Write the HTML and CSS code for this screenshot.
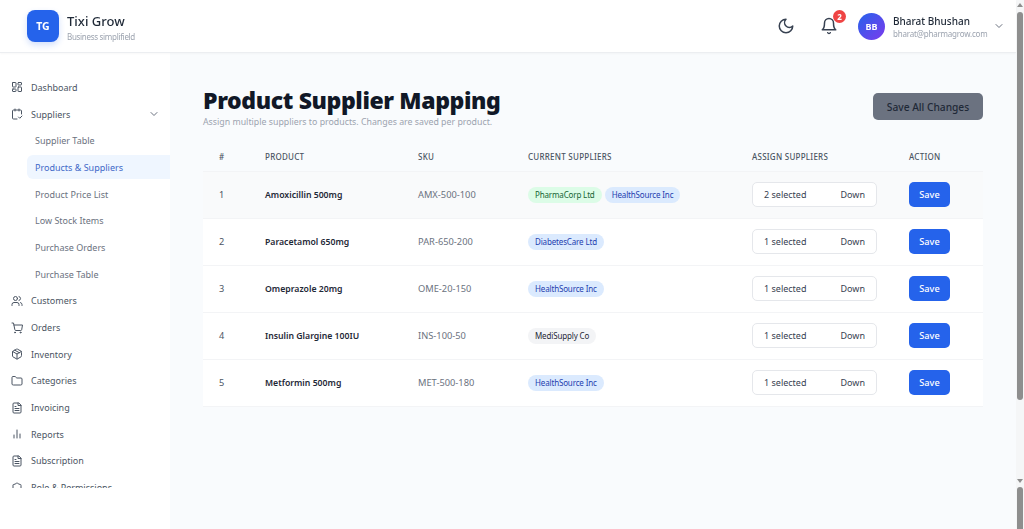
FILE: index.html
```html
<!DOCTYPE html>
<html lang="en">
<head>
<meta charset="utf-8">
<title>Product Supplier Mapping</title>
<link rel="stylesheet" href="styles.css">
</head>
<body>
<div class="app">
  <header class="topbar">
    <div class="brand">
      <div class="logo">TG</div>
      <div class="brand-text">
        <div class="brand-name">Tixi Grow</div>
        <div class="brand-sub">Business simplifield</div>
      </div>
    </div>
    <div class="top-actions">
      <svg class="moon" viewBox="0 0 24 24" width="18" height="18"><path d="M12 3a6 6 0 0 0 9 9 9 9 0 1 1-9-9Z"/></svg>
      <div class="bell-wrap">
        <svg class="moon" viewBox="0 0 24 24" width="18" height="18"><path d="M6 8a6 6 0 0 1 12 0c0 7 3 9 3 9H3s3-2 3-9"/><path d="M10.3 21a1.94 1.94 0 0 0 3.4 0"/></svg>
        <span class="badge">2</span>
      </div>
      <div class="user">
        <div class="avatar">BB</div>
        <div class="user-text">
          <div class="user-name">Bharat Bhushan</div>
          <div class="user-mail">bharat@pharmagrow.com</div>
        </div>
        <svg class="chev" viewBox="0 0 24 24" width="12" height="12"><path d="m6 9 6 6 6-6"/></svg>
      </div>
    </div>
  </header>
  <div class="body">
    <aside class="sidebar">
      <nav class="nav">
        <a class="item"><svg class="ico" viewBox="0 0 24 24"><rect x="3" y="3" width="7" height="9" rx="1"/><rect x="14" y="3" width="7" height="5" rx="1"/><rect x="14" y="12" width="7" height="9" rx="1"/><rect x="3" y="16" width="7" height="5" rx="1"/></svg>Dashboard</a>
        <a class="item"><svg class="ico" viewBox="0 0 24 24"><path d="M8 2v4M16 2v4"/><path d="M21 12V6a2 2 0 0 0-2-2H5a2 2 0 0 0-2 2v14a2 2 0 0 0 2 2h7"/><path d="m15 18 2.500 2.500L22 16"/></svg>Suppliers<svg class="chev item-chev" viewBox="0 0 24 24" width="12" height="12"><path d="m6 9 6 6 6-6"/></svg></a>
        <a class="sub">Supplier Table</a>
        <a class="sub active">Products &amp; Suppliers</a>
        <a class="sub">Product Price List</a>
        <a class="sub">Low Stock Items</a>
        <a class="sub">Purchase Orders</a>
        <a class="sub">Purchase Table</a>
        <a class="item"><svg class="ico" viewBox="0 0 24 24"><path d="M16 21v-2a4 4 0 0 0-4-4H6a4 4 0 0 0-4 4v2"/><circle cx="9" cy="7" r="4"/><path d="M22 21v-2a4 4 0 0 0-3-3.900M16 3.100a4 4 0 0 1 0 7.800"/></svg>Customers</a>
        <a class="item"><svg class="ico" viewBox="0 0 24 24"><circle cx="8" cy="21" r="1"/><circle cx="19" cy="21" r="1"/><path d="M2 2h3l2.700 13.400a2 2 0 0 0 2 1.600h9.700a2 2 0 0 0 2-1.600L23 6H6"/></svg>Orders</a>
        <a class="item"><svg class="ico" viewBox="0 0 24 24"><path d="M21 8a2 2 0 0 0-1-1.700l-7-4a2 2 0 0 0-2 0l-7 4A2 2 0 0 0 3 8v8a2 2 0 0 0 1 1.700l7 4a2 2 0 0 0 2 0l7-4a2 2 0 0 0 1-1.700Z"/><path d="m3.300 7 8.700 5 8.700-5M12 22V12M7.500 4.300l9 5.100"/></svg>Inventory</a>
        <a class="item"><svg class="ico" viewBox="0 0 24 24"><path d="M20 20a2 2 0 0 0 2-2V8a2 2 0 0 0-2-2h-7.900a2 2 0 0 1-1.700-.9l-.8-1.200A2 2 0 0 0 7.900 3H4a2 2 0 0 0-2 2v13a2 2 0 0 0 2 2Z"/></svg>Categories</a>
        <a class="item"><svg class="ico" viewBox="0 0 24 24"><path d="M15 2H6a2 2 0 0 0-2 2v16a2 2 0 0 0 2 2h12a2 2 0 0 0 2-2V7Z"/><path d="M14 2v5h6M16 13H8M16 17H8M10 9H8"/></svg>Invoicing</a>
        <a class="item"><svg class="ico" viewBox="0 0 24 24"><path d="M12 20V4M18 20v-8M6 20v-6"/></svg>Reports</a>
        <a class="item"><svg class="ico" viewBox="0 0 24 24"><path d="M15 2H6a2 2 0 0 0-2 2v16a2 2 0 0 0 2 2h12a2 2 0 0 0 2-2V7Z"/><path d="M14 2v5h6M16 13H8M16 17H8M10 9H8"/></svg>Subscription</a>
        <a class="item"><svg class="ico" viewBox="0 0 24 24"><path d="M20 13c0 5-3.500 7.500-7.700 9a1 1 0 0 1-.6 0C7.500 20.500 4 18 4 13V6a1 1 0 0 1 1-1c2 0 4.500-1.200 6.200-2.700a1.200 1.200 0 0 1 1.600 0C14.500 3.800 17 5 19 5a1 1 0 0 1 1 1Z"/></svg>Role &amp; Permissions</a>
      </nav>
    </aside>
    <main class="main">
      <div class="page-head">
        <div>
          <h1 class="title">Product Supplier Mapping</h1>
          <p class="subtitle">Assign multiple suppliers to products. Changes are saved per product.</p>
        </div>
        <button class="save-all">Save All Changes</button>
      </div>
      <table class="table">
        <colgroup><col class="c1"><col class="c2"><col class="c3"><col class="c4"><col class="c5"><col class="c6"></colgroup>
        <thead>
          <tr><th>#</th><th>Product</th><th>SKU</th><th>Current Suppliers</th><th>Assign Suppliers</th><th>Action</th></tr>
        </thead>
        <tbody>
          <tr class="hover"><td>1</td><td class="pname">Amoxicillin 500mg</td><td class="sku">AMX-500-100</td><td><span class="tag green">PharmaCorp Ltd</span><span class="tag blue">HealthSource Inc</span></td><td><div class="select"><span>2 selected</span><span>Down</span></div></td><td><button class="save">Save</button></td></tr>
          <tr><td>2</td><td class="pname">Paracetamol 650mg</td><td class="sku">PAR-650-200</td><td><span class="tag blue">DiabetesCare Ltd</span></td><td><div class="select"><span>1 selected</span><span>Down</span></div></td><td><button class="save">Save</button></td></tr>
          <tr><td>3</td><td class="pname">Omeprazole 20mg</td><td class="sku">OME-20-150</td><td><span class="tag blue">HealthSource Inc</span></td><td><div class="select"><span>1 selected</span><span>Down</span></div></td><td><button class="save">Save</button></td></tr>
          <tr><td>4</td><td class="pname">Insulin Glargine 100IU</td><td class="sku">INS-100-50</td><td><span class="tag gray">MediSupply Co</span></td><td><div class="select"><span>1 selected</span><span>Down</span></div></td><td><button class="save">Save</button></td></tr>
          <tr><td>5</td><td class="pname">Metformin 500mg</td><td class="sku">MET-500-180</td><td><span class="tag blue">HealthSource Inc</span></td><td><div class="select"><span>1 selected</span><span>Down</span></div></td><td><button class="save">Save</button></td></tr>
        </tbody>
      </table>
    </main>
  </div>
</div>
<div class="scrollbar">
  <span class="arrow up"></span>
  <span class="thumb t1"></span>
  <span class="arrow down"></span>
  <span class="thumb t2"></span>
</div>
</body>
</html>
```

FILE: styles.css
```css
* { box-sizing: border-box; }
html, body { margin: 0; height: 529px; overflow: hidden; background: #fff; }
body { font-family: "Noto Sans", "Liberation Sans", sans-serif; color: #1f2937; }

.app { width: 1016px; height: 529px; display: flex; flex-direction: column; }
.topbar { height: 53px; flex: none; display: flex; align-items: center; justify-content: space-between; padding: 0 11px 0 27px; background: #fff; border-bottom: 1px solid #eceef1; box-shadow: 0 1px 2px rgba(0,0,0,.03); position: relative; z-index: 2; }
.brand { display: flex; align-items: center; gap: 8px; margin-top: -1px; }
.brand-text { padding-top: 2px; }
.logo { width: 32px; height: 32px; border-radius: 8px; background: #2563eb; color: #fff; font-size: 10.500px; font-weight: 700; display: flex; align-items: center; justify-content: center; box-shadow: 0 3px 6px rgba(37,99,235,.2); }
.brand-name { font-size: 13px; font-weight: 500; line-height: 19px; color: #1f2937; }
.brand-sub { font-size: 8px; letter-spacing: -.3px; line-height: 11px; color: #9ca3af; }
.top-actions { display: flex; align-items: center; }
.moon { fill: none; stroke: #374151; stroke-width: 2; stroke-linecap: round; stroke-linejoin: round; display: block; }
.bell-wrap { position: relative; margin-left: 25px; margin-top: -1px; }
.badge { position: absolute; top: -7px; right: -8px; width: 13px; height: 13px; border-radius: 50%; background: #ef4444; color: #fff; font-size: 8px; font-weight: 700; line-height: 13px; text-align: center; }
.user { display: flex; align-items: center; margin-left: 20px; }
.avatar { width: 27px; height: 27px; border-radius: 50%; background: linear-gradient(135deg, #2563eb, #7c3aed); color: #fff; font-size: 9px; font-weight: 700; display: flex; align-items: center; justify-content: center; }
.user-text { margin-left: 8px; width: 92px; padding-top: 2px; }
.user-name { font-size: 10px; font-weight: 500; line-height: 14px; color: #1f2937; }
.user-mail { font-size: 8px; letter-spacing: -.2px; line-height: 12px; color: #9ca3af; }
.chev { fill: none; stroke: #6b7280; stroke-width: 2; stroke-linecap: round; stroke-linejoin: round; flex: none; }
.user .chev { margin-left: 8px; }

.body { flex: 1; display: flex; min-height: 0; background: #f9fbfd; }
.sidebar { width: 170px; flex: none; height: 476px; background: #fff; }
.nav { height: 435px; overflow: hidden; padding-top: 21px; }
.item, .sub { height: 26.700px; display: flex; align-items: center; font-size: 9px; color: #4b5563; }
.item { padding-left: 11px; gap: 8px; }
.ico { width: 12px; height: 12px; flex: none; fill: none; stroke: #4b5563; stroke-width: 2; stroke-linecap: round; stroke-linejoin: round; }
.item-chev { margin-left: auto; margin-right: 10px; }
.sub { margin-left: 27px; padding-left: 8px; color: #6b7280; }
.sub.active { background: #eff6ff; color: #4169c8; border-radius: 6px 0 0 6px; height: 24px; margin-top: 1.350px; margin-bottom: 1.350px; }

.main { flex: 1; padding: 34px 33px 0; min-width: 0; }
.page-head { display: flex; justify-content: space-between; align-items: flex-start; height: 58px; }
.title { margin: 0; font-size: 23px; line-height: 27px; font-weight: 900; letter-spacing: -.38px; color: #111827; }
.subtitle { margin: 2px 0 0; font-size: 8.800px; line-height: 13px; color: #9ca3af; }
.save-all { margin-top: 6px; width: 110px; height: 27px; border: 0; border-radius: 5px; background: #6b7280; color: #1f2937; font: 500 10.200px "Noto Sans", sans-serif; padding: 0; }

.table { width: 780px; border-collapse: collapse; table-layout: fixed; }
.c1 { width: 62px; } .c2 { width: 153px; } .c3 { width: 110px; } .c4 { width: 224px; } .c5 { width: 157px; } .c6 { width: 74px; }
th { height: 26px; padding: 0 0 2px; text-align: left; font-size: 8px; font-weight: 500; letter-spacing: .25px; text-transform: uppercase; color: #4b5563; border-bottom: 1px solid #f3f4f6; }
td { height: 47px; padding: 0; font-size: 9.200px; color: #4b5563; background: #fff; border-bottom: 1px solid #f3f4f6; }
th:first-child, td:first-child { padding-left: 16px; }
tr.hover td { background: #f9fafb; }
.pname { font-size: 8.700px; font-weight: 600; color: #1f2937; }
.sku { font-size: 9.300px; color: #6b7280; }
.tag { display: inline-block; height: 16px; line-height: 16px; border-radius: 8px; padding: 0 7px; font-size: 8px; letter-spacing: -.15px; margin-right: 3px; vertical-align: middle; }
.tag.green { background: #dcfce7; color: #166534; }
.tag.blue { background: #dbeafe; color: #1e40af; }
.tag.gray { background: #f3f4f6; color: #1f2937; }
.select { width: 125px; height: 25px; display: flex; align-items: center; justify-content: space-between; padding: 0 11px; background: #fff; border: 1px solid #e5e7eb; border-radius: 5px; font-size: 9px; color: #374151; }
.save { display: block; width: 41px; height: 25px; border: 0; border-radius: 5px; background: #2563eb; color: #fff; font: 500 9.200px "Noto Sans", sans-serif; padding: 0; }

.scrollbar { position: fixed; top: 0; right: 0; width: 8px; height: 529px; background: #f5f6f7; }
.thumb { position: absolute; left: 1px; width: 6px; background: #8e8e8e; border-radius: 3px 3px 0 0; }
.t1 { top: 12px; height: 388px; border-radius: 3px; }
.t2 { top: 487px; height: 42px; }
.arrow { position: absolute; left: 1px; width: 0; height: 0; border-left: 3px solid transparent; border-right: 3px solid transparent; }
.up { top: 3px; border-bottom: 4px solid #8e8e8e; }
.down { top: 479px; border-top: 4px solid #8e8e8e; }
```
